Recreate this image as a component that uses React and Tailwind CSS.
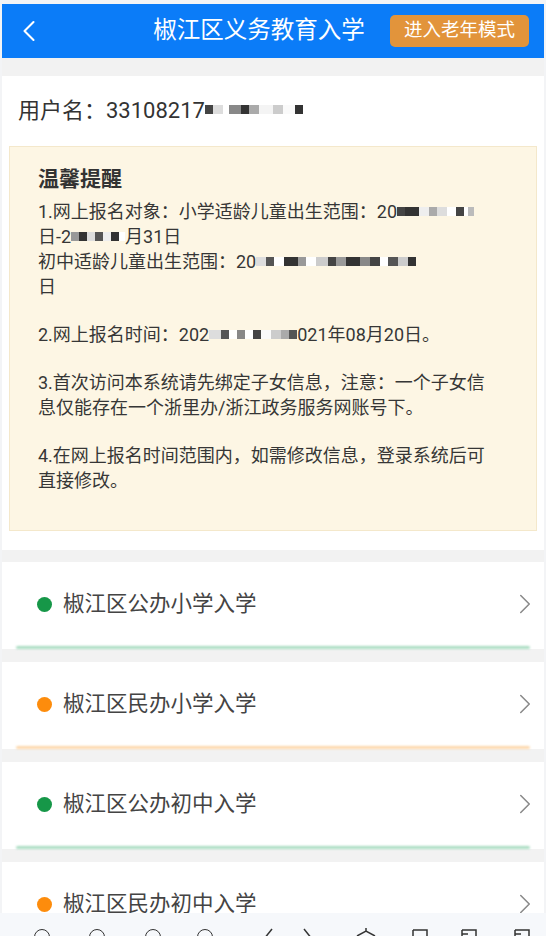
import { ChevronLeft, ChevronRight } from 'lucide-react';

const font = { fontFamily: 'Roboto, "Noto Sans CJK SC", sans-serif' };

// pixelated blocks that hide part of a number
const Mosaic = ({ cells }) => (
  <span className="inline-flex items-center align-middle h-[18px] -mt-[3px]">
    {cells.map((c, i) => (
      <span key={i} className="inline-block h-[9px]" style={{ width: c[0], background: c[1] }} />
    ))}
  </span>
);

const items = [
  { name: '椒江区公办小学入学', dot: 'bg-[#169748]', line: 'bg-[#a9dcc1]' },
  { name: '椒江区民办小学入学', dot: 'bg-[#fd8c0c]', line: 'bg-[#fcd7ab]' },
  { name: '椒江区公办初中入学', dot: 'bg-[#169748]', line: 'bg-[#a9dcc1]' },
  { name: '椒江区民办初中入学', dot: 'bg-[#fd8c0c]', line: 'bg-[#fcd7ab]' },
];

const App = () => {
  return (
    <div style={font} className="h-[936px] overflow-hidden bg-[#f3f4f6] flex flex-col">
      <div className="mx-[2px] mt-[4px] flex flex-col flex-1 bg-[#f2f2f2]">

        {/* Header */}
        <div className="h-[54px] shrink-0 bg-[#0b7cf8] flex items-center relative px-[9px]">
          <ChevronLeft className="w-[36px] h-[36px] text-white" strokeWidth={1.4} />
          <div className="absolute left-0 right-0 text-center pr-[28px] text-white text-[23.5px] pointer-events-none">
            椒江区义务教育入学
          </div>
          <div className="ml-auto mr-[6px] h-[32px] px-[14px] rounded-[5px] bg-[#e2943b] text-white text-[18.5px] flex items-center">
            进入老年模式
          </div>
        </div>

        <div className="h-[18px] shrink-0" />

        {/* User + notice */}
        <div className="bg-white pt-[20px] pb-[19px] shrink-0">
          <div className="pl-[16px] text-[22px] text-[#333] leading-[30px] flex items-center">
            用户名：33108217
            <Mosaic cells={[[8, '#444'], [10, '#ddd'], [6, '#fff'], [12, '#888'], [8, '#333'], [10, '#aaa'], [14, '#f4f4f4'], [10, '#ccc'], [12, '#fafafa'], [8, '#333']]} />
          </div>
          <div className="mt-[20px] mx-[7px] bg-[#fdf6e4] border border-[#f4e8cb] pl-[28px] pr-[36px] pt-[19px] pb-[37px] text-[18px] text-[#363636] leading-[25px]">
            <div className="text-[21px] font-bold leading-[26px] mb-[7px] text-[#333]">温馨提醒</div>
            <div className="whitespace-nowrap">1.网上报名对象：小学适龄儿童出生范围：20<Mosaic cells={[[8, '#444'], [14, '#333'], [10, '#eee'], [8, '#aaa'], [10, '#ddd'], [9, '#fff'], [8, '#444'], [4, '#fff'], [6, '#bbb']]} /></div>
            <div className="whitespace-nowrap">日-2<Mosaic cells={[[8, '#999'], [8, '#333'], [8, '#ddd'], [8, '#555'], [8, '#eee'], [8, '#333'], [6, '#fff']]} />月31日</div>
            <div className="whitespace-nowrap">初中适龄儿童出生范围：20<Mosaic cells={[[10, '#ddd'], [8, '#555'], [10, '#fff'], [14, '#333'], [8, '#999'], [10, '#fff'], [12, '#ccc'], [8, '#444'], [10, '#999'], [14, '#333'], [10, '#888'], [10, '#444'], [8, '#fff'], [10, '#555'], [10, '#ccc'], [8, '#333']]} /></div>
            <div className="mb-[23px]">日</div>
            <div className="whitespace-nowrap mb-[23px]">2.网上报名时间：202<Mosaic cells={[[12, '#ddd'], [8, '#555'], [8, '#fff'], [8, '#888'], [8, '#fff'], [8, '#444'], [10, '#fafafa'], [10, '#ccc'], [8, '#aaa'], [8, '#555']]} />021年08月20日。</div>
            <div>3.首次访问本系统请先绑定子女信息，注意：一个子女信</div>
            <div className="mb-[23px]">息仅能存在一个浙里办/浙江政务服务网账号下。</div>
            <div>4.在网上报名时间范围内，如需修改信息，登录系统后可</div>
            <div>直接修改。</div>
          </div>
        </div>

        {/* Entry list */}
        <div className="flex flex-col gap-[13px] pt-[12px]">
          {items.map((it) => (
            <div key={it.name} className="bg-white">
              <div className="h-[84px] flex items-center pl-[35px] pr-[2px]">
                <span className={`w-[15px] h-[15px] rounded-full ${it.dot}`} />
                <span className="ml-[11px] text-[21.5px] text-[#444]">{it.name}</span>
                <ChevronRight className="ml-auto w-[34px] h-[34px] text-[#8a8a8a]" strokeWidth={1.1} />
              </div>
              <div className={`mx-[14px] h-[3px] rounded-full blur-[0.8px] ${it.line}`} />
            </div>
          ))}
        </div>
      </div>

      {/* Browser toolbar, cut off at the bottom */}
      <div className="absolute left-0 right-0 top-[913px] h-[23px] bg-[#f6f8fb] overflow-hidden">
        <div className="relative h-full">
          {[42, 97, 153, 205].map((x) => (
            <span key={x} className="absolute top-[16px] w-[16px] h-[16px] rounded-full border-[1.5px] border-[#333]" style={{ left: x - 8 }} />
          ))}
          <svg className="absolute left-[258px] top-[14px]" width="60" height="12" viewBox="0 0 60 12" fill="none" stroke="#333" strokeWidth="1.5">
            <path d="M14 2 L6 12" />
            <path d="M46 2 L54 12" />
          </svg>
          <svg className="absolute left-[350px] top-[13px]" width="190" height="12" viewBox="0 0 190 12" fill="none" stroke="#333" strokeWidth="1.5">
            <path d="M16 2 v3 M7 10 L16 5 L25 10" />
            <path d="M63 4 h14 v8 M63 4 v8" />
            <path d="M112 4 h14 v8 M112 4 v8 M112 8 h6" />
            <path d="M165 4 h14 v8 M165 4 v8 M165 8 h6" />
          </svg>
        </div>
      </div>
    </div>
  );
};

export default App;
